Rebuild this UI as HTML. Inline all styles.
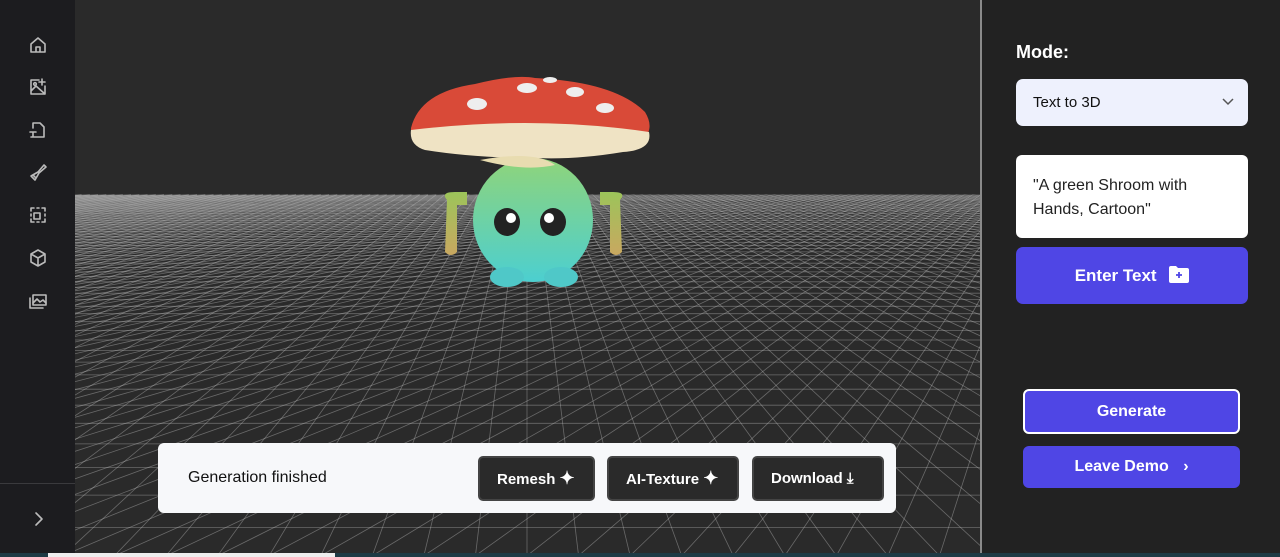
<!DOCTYPE html>
<html><head><meta charset="utf-8"><style>
*{margin:0;padding:0;box-sizing:border-box}
body{width:1280px;height:557px;overflow:hidden;background:#2a2a2a;font-family:"Liberation Sans",sans-serif;position:relative}
#side{position:absolute;left:0;top:0;width:75px;height:553px;background:#1c1c1f}
#side svg{position:absolute;left:28px;width:20px;height:20px;fill:none;stroke:#bbb;stroke-width:1.6;stroke-linecap:round;stroke-linejoin:round}
#sep{position:absolute;left:0;top:483px;width:75px;height:1px;background:#3a3a3d}
#view{position:absolute;left:75px;top:0;width:905px;height:553px;background:#2a2a2a;overflow:hidden}
#right{position:absolute;left:980px;top:0;width:300px;height:553px;background:#222;border-left:2px solid #8a8a8a}
.mode{position:absolute;left:34px;top:42px;color:#fff;font-weight:bold;font-size:18px}
.sel{position:absolute;left:34px;top:79px;width:232px;height:47px;background:#eef1fd;border-radius:7px;font-size:15px;color:#111;padding:15px 17px}
.txt{position:absolute;left:34px;top:155px;width:232px;height:83px;background:#fff;border-radius:6px;font-size:16px;color:#222;padding:19px 17px;line-height:24px}
.ent{position:absolute;left:34px;top:247px;width:232px;height:57px;background:#4f46e5;border-radius:7px;color:#fff;font-weight:bold;font-size:17px;text-align:center;line-height:57px}
.gen{position:absolute;left:41px;top:389px;width:217px;height:45px;background:#4f46e5;border:2px solid #fff;border-radius:6px;color:#fff;font-weight:bold;font-size:16px;text-align:center;line-height:41px}
.lv{position:absolute;left:41px;top:446px;width:217px;height:42px;background:#4f46e5;border-radius:6px;color:#fff;font-weight:bold;font-size:16px;text-align:center;line-height:42px}
#bar{position:absolute;left:158px;top:443px;width:738px;height:70px;background:#f7f8fa;border-radius:6px}
#bar .l{position:absolute;left:30px;top:26px;font-size:16px;color:#111}
.b{position:absolute;top:13px;height:45px;background:#2a2a2a;border:2px solid #444;border-radius:5px;color:#fff;font-weight:bold;font-size:15px;line-height:41px;padding-left:17px}
#bottom{position:absolute;left:0;top:553px;width:1280px;height:4px;background:#1e3a44}
</style></head><body>
<div id="view"><svg id="g" width="905" height="553" style="position:absolute;left:0;top:0"></svg>
<svg width="905" height="553" style="position:absolute;left:0;top:0">
<defs><linearGradient id="bd" x1="0" y1="0" x2="0" y2="1"><stop offset="0" stop-color="#8fd47a"/><stop offset="1" stop-color="#4ccfd0"/></linearGradient>
<linearGradient id="ar" x1="0" y1="0" x2="0" y2="1"><stop offset="0" stop-color="#9cc45a"/><stop offset="1" stop-color="#c9a860"/></linearGradient></defs>
<path d="M372 200 Q365 192 380 192 L392 192 L392 205 L382 205 L382 252 Q376 258 370 252Z" fill="url(#ar)"/>
<path d="M545 200 Q552 192 538 192 L525 192 L525 205 L535 205 L535 252 Q541 258 547 252Z" fill="url(#ar)"/>
<ellipse cx="458" cy="220" rx="60" ry="62" fill="url(#bd)"/>
<ellipse cx="432" cy="277" rx="17" ry="10" fill="#4fc8c8"/>
<ellipse cx="486" cy="277" rx="17" ry="10" fill="#4fc8c8"/>
<ellipse cx="432" cy="222" rx="13" ry="14" fill="#222"/><circle cx="436" cy="218" r="5" fill="#fff"/>
<ellipse cx="478" cy="222" rx="13" ry="14" fill="#222"/><circle cx="474" cy="218" r="5" fill="#fff"/>
<path d="M336 128 Q345 92 400 84 Q440 74 460 78 Q540 82 570 112 Q578 125 572 135 Q460 118 336 135Z" fill="#d94a38"/>
<path d="M336 130 Q460 115 574 132 Q578 150 548 152 Q500 160 460 158 Q400 158 350 150 Q334 145 336 130Z" fill="#efe3c4"/>
<path d="M405 160 Q460 150 480 165 Q450 172 405 160Z" fill="#e8dcb0"/>
<ellipse cx="402" cy="104" rx="10" ry="6" fill="#eee"/><ellipse cx="452" cy="88" rx="10" ry="5" fill="#eee"/><ellipse cx="500" cy="92" rx="9" ry="5" fill="#eee"/><ellipse cx="530" cy="108" rx="9" ry="5" fill="#eee"/><ellipse cx="475" cy="80" rx="7" ry="3" fill="#eee"/>
</svg></div>
<div id="side">
<svg style="top:35px" viewBox="0 0 20 20"><path d="M3 9L10 3l7 6v8H3z M8 17v-5h4v5"/></svg>
<svg style="top:77px" viewBox="0 0 20 20"><path d="M11 3H3v14h14V9 M3 14l5-5 9 8 M14 2v6 M11 5h6"/><circle cx="7" cy="7" r="1.3"/></svg>
<svg style="top:120px" viewBox="0 0 20 20"><path d="M5 8V3h7l4 4v10H7 M2 12h6 M5 12v5 M3 17h4"/></svg>
<svg style="top:162px" viewBox="0 0 20 20"><path d="M10 10l6-7 2 2-7 6z M10 10l-7 4 4 4 4-7 M5 13l2 2"/></svg>
<svg style="top:205px" viewBox="0 0 20 20"><path d="M3 6V3h3 M14 3h3v3 M17 14v3h-3 M6 17H3v-3 M3 9v2 M17 9v2 M9 3h2 M9 17h2"/><rect x="6" y="8" width="6" height="6"/></svg>
<svg style="top:248px" viewBox="0 0 20 20"><path d="M10 2l7 4v8l-7 4-7-4V6z M3 6l7 4 7-4 M10 10v8"/></svg>
<svg style="top:291px" viewBox="0 0 20 20"><rect x="5" y="4" width="13" height="10"/><path d="M2 7v10h13 M5 12l4-4 3 3 3-2 3 3"/></svg>
<div id="sep"></div>
<svg style="top:509px;left:29px" viewBox="0 0 20 20"><path d="M7 4l6 6-6 6"/></svg>
</div>
<div id="right">
<div class="mode">Mode:</div>
<div class="sel">Text to 3D<svg style="position:absolute;right:14px;top:19px" width="12" height="8" viewBox="0 0 12 8"><path d="M1 1l5 5 5-5" fill="none" stroke="#555" stroke-width="1.5"/></svg></div>
<div class="txt">"A green Shroom with Hands, Cartoon"</div>
<div class="ent">Enter Text <svg width="20" height="17" viewBox="0 0 20 17" style="vertical-align:-2px;margin-left:8px"><path d="M0 2q0-2 2-2h5l2 2h9q2 0 2 2v11q0 2-2 2H2q-2 0-2-2z" fill="#fff"/><path d="M10 6v6M7 9h6" stroke="#4f46e5" stroke-width="1.8"/></svg></div>
<div class="gen">Generate</div>
<div class="lv">Leave Demo <span style="margin-left:10px">›</span></div>
</div>
<div id="bar"><div class="l">Generation finished</div>
<div class="b" style="left:320px;width:117px">Remesh <span style="font-size:18px">✦</span></div>
<div class="b" style="left:449px;width:132px">AI-Texture <span style="font-size:18px">✦</span></div>
<div class="b" style="left:594px;width:132px">Download <span>⤓</span></div>
</div>
<div id="bottom"><div style="position:absolute;left:48px;width:287px;height:4px;background:#eee"></div></div>
<script>
var cx=452,hy=126,f=550,o='';
var Zn=1.25,Zf=8,XR=12,d=0.12;
function P(X,Z){return[(cx+f*X/Z).toFixed(1),(hy+f/Z).toFixed(1)]}
function ln(x1,z1,x2,z2){var a=P(x1,z1),b=P(x2,z2);o+='<line x1="'+a[0]+'" y1="'+a[1]+'" x2="'+b[0]+'" y2="'+b[1]+'"/>'}
for(var X=-XR;X<=XR+1e-6;X+=d){ln(X,Zn,X,Zf)}
for(var Z=Zn;Z<=Zf+1e-6;Z+=d){ln(-XR,Z,XR,Z)}
for(var k=-XR-Zf;k<=XR-Zn;k+=d){
 var z1=Math.max(Zn,-XR-k),z2=Math.min(Zf,XR-k);
 if(z1<z2)ln(k+z1,z1,k+z2,z2);
}
document.getElementById('g').innerHTML='<g stroke="rgba(200,200,200,0.4)" stroke-width="0.8" fill="none">'+o+'</g>';
</script>
</body></html>
